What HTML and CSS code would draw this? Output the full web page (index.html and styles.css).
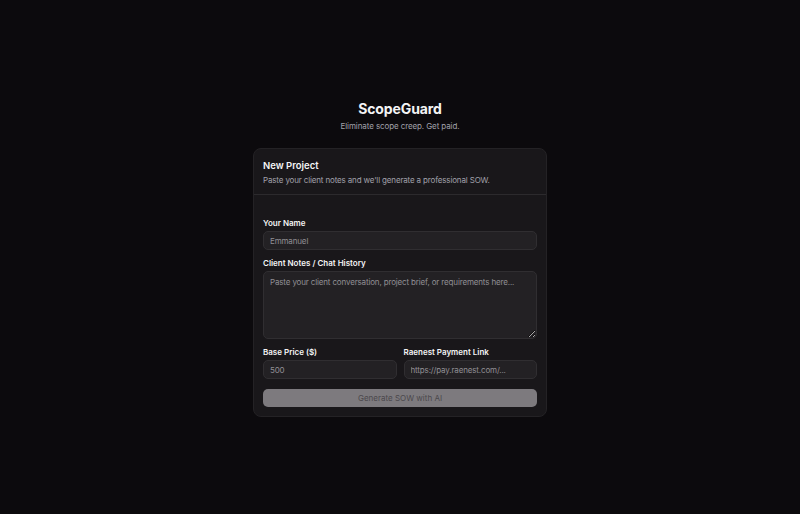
FILE: index.html
```html
<!DOCTYPE html>
<html lang="en">
<head>
  <meta charset="UTF-8" />
  <meta name="viewport" content="width=device-width, initial-scale=1.0" />
  <title>ScopeGuard</title>
  <link rel="stylesheet" href="styles.css">
</head>
<body>
  <div class="page">
    <div class="brand">
      <h1>ScopeGuard</h1>
      <p>Eliminate scope creep. Get paid.</p>
    </div>

    <div class="card">
      <div class="card-head">
        <h2>New Project</h2>
        <p>Paste your client notes and we'll generate a professional SOW.</p>
      </div>

      <form class="card-body" onsubmit="return false">
        <div class="field">
          <label for="name">Your Name</label>
          <input id="name" type="text" placeholder="Emmanuel" />
        </div>

        <div class="field">
          <label for="notes">Client Notes / Chat History</label>
          <textarea id="notes" placeholder="Paste your client conversation, project brief, or requirements here..."></textarea>
        </div>

        <div class="row">
          <div class="field">
            <label for="price">Base Price ($)</label>
            <input id="price" type="text" placeholder="500" />
          </div>
          <div class="field">
            <label for="link">Raenest Payment Link</label>
            <input id="link" type="text" placeholder="https://pay.raenest.com/..." />
          </div>
        </div>

        <button id="generate-btn" disabled>Generate SOW with AI</button>
      </form>
    </div>
  </div>
</body>
</html>
```

FILE: styles.css
```css
body {
  margin: 0;
  background: #0c0a0d;
  color: #f4f4f5;
  font-family: 'Inter', 'Liberation Sans', sans-serif;
}
.page {
  min-height: 514px;
  box-sizing: border-box;
  padding-top: 3px;
  display: flex;
  flex-direction: column;
  align-items: center;
  justify-content: center;
}
.brand {
  text-align: center;
  margin-bottom: 16px;
}
.brand h1 {
  margin: 0;
  font-size: 14px;
  line-height: 18px;
  font-weight: 700;
  letter-spacing: -0.1px;
}
.brand p {
  margin: 2px 0 0;
  font-size: 8px;
  line-height: 12px;
  color: #a1a1aa;
  letter-spacing: -0.1px;
}
.card {
  width: 294px;
  box-sizing: border-box;
  background: #19171a;
  border: 1px solid #242225;
  border-radius: 8px;
}
.card-head {
  padding: 10px 9px 8px;
  border-bottom: 1px solid #2c2a2d;
}
.card-head h2 {
  margin: 0;
  font-size: 9.5px;
  line-height: 14px;
  font-weight: 600;
}
.card-head p {
  margin: 1px 0 0;
  font-size: 8px;
  line-height: 12px;
  color: #a1a1aa;
  letter-spacing: -0.15px;
}
.card-body {
  padding: 22px 9px 9px;
  display: flex;
  flex-direction: column;
  gap: 7px;
}
.field {
  display: flex;
  flex-direction: column;
  gap: 2px;
  min-width: 0;
}
.field label {
  font-size: 8px;
  line-height: 12px;
  font-weight: 600;
}
.field input,
.field textarea {
  box-sizing: border-box;
  width: 100%;
  background: #232124;
  border: 1px solid #302e31;
  border-radius: 5px;
  color: #e4e4e7;
  font-family: inherit;
  font-size: 8px;
  letter-spacing: -0.15px;
  padding: 0 6px;
  outline: none;
}
.field input {
  height: 19px;
}
.field textarea {
  height: 68px;
  padding-top: 5px;
  resize: vertical;
}
.field input::placeholder,
.field textarea::placeholder {
  color: #918f94;
}
.row {
  display: grid;
  grid-template-columns: 1fr 1fr;
  gap: 7px;
}
#generate-btn {
  margin-top: 3px;
  height: 18px;
  border: none;
  border-radius: 5px;
  background: #7d7a7e;
  color: #4b484c;
  font-family: inherit;
  font-size: 8px;
  cursor: not-allowed;
}
```
